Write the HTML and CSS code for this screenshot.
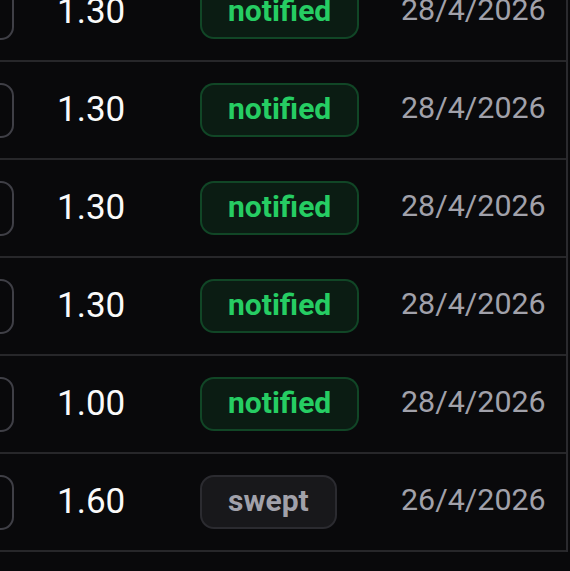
FILE: index.html
```html
<!DOCTYPE html>
<html lang="en">
<head>
    <meta charset="UTF-8">
    <meta name="viewport" content="width=device-width, initial-scale=1.0">
    <title>Payouts</title>
    <link rel="stylesheet" href="styles.css">
</head>
<body>
    <div id="wrap">
        <div id="list">
            <div class="row">
                <div class="cell act"><span class="btn"></span></div>
                <div class="cell amount">1.30</div>
                <div class="cell"><span class="badge ok">notified</span></div>
                <div class="cell date">28/4/2026</div>
            </div>
            <div class="row">
                <div class="cell act"><span class="btn"></span></div>
                <div class="cell amount">1.30</div>
                <div class="cell"><span class="badge ok">notified</span></div>
                <div class="cell date">28/4/2026</div>
            </div>
            <div class="row">
                <div class="cell act"><span class="btn"></span></div>
                <div class="cell amount">1.30</div>
                <div class="cell"><span class="badge ok">notified</span></div>
                <div class="cell date">28/4/2026</div>
            </div>
            <div class="row">
                <div class="cell act"><span class="btn"></span></div>
                <div class="cell amount">1.30</div>
                <div class="cell"><span class="badge ok">notified</span></div>
                <div class="cell date">28/4/2026</div>
            </div>
            <div class="row">
                <div class="cell act"><span class="btn"></span></div>
                <div class="cell amount">1.00</div>
                <div class="cell"><span class="badge ok">notified</span></div>
                <div class="cell date">28/4/2026</div>
            </div>
            <div class="row">
                <div class="cell act"><span class="btn"></span></div>
                <div class="cell amount">1.60</div>
                <div class="cell"><span class="badge">swept</span></div>
                <div class="cell date">26/4/2026</div>
            </div>
        </div>
    </div>
</body>
</html>
```

FILE: styles.css
```css
*{
    margin: 0;
    padding: 0;
    box-sizing: border-box;
}
html, body{
    background: #09090b;
    height: 100%;
    overflow: hidden;
}
body{
    font-family: Roboto, "Liberation Sans", sans-serif;
}

#wrap{
    width: 570px;
    overflow: hidden;
}
#list{
    width: 680px;
    margin: -36px 0 0 -112px;
    border-right: 2px solid #2a2a2e;
}
.row{
    display: grid;
    grid-template-columns: 169px 143px 201px 1fr;
    height: 98px;
    border-bottom: 2px solid #27272a;
}
.cell{
    display: flex;
    align-items: center;
}
.act{
    padding-left: 16px;
}
.btn{
    display: block;
    width: 110px;
    height: 55px;
    border: 2px solid #3f3f46;
    border-radius: 13px;
}
.amount{
    color: #fafafa;
    font-size: 35px;
    padding-bottom: 2px;
}
.date{
    color: #a1a1aa;
    font-size: 30.4px;
    padding-bottom: 5px;
}

.badge{
    display: inline-block;
    padding: 6px 26px 8px;
    line-height: 36px;
    font-size: 30px;
    font-weight: 700;
    border-radius: 14px;
    border: 2px solid #2b2b30;
    background: #18181b;
    color: #a1a1aa;
}
.badge.ok{
    border-color: rgba(34, 197, 94, 0.25);
    background: rgba(34, 197, 94, 0.1);
    color: #26cd63;
}
```
